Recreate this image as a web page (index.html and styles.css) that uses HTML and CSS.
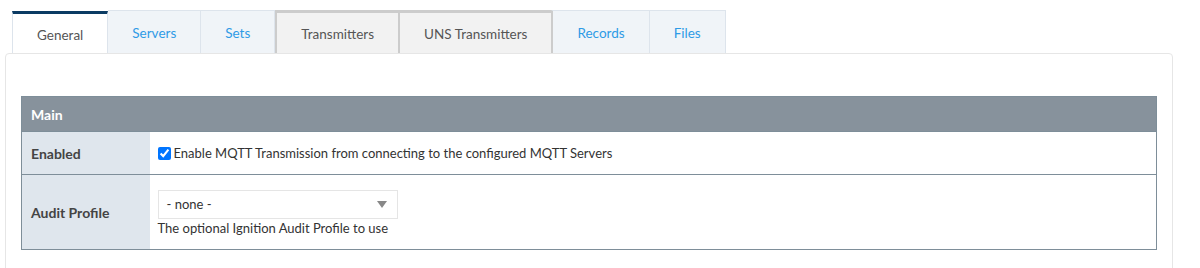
FILE: index.html
```html
<!DOCTYPE html>
<html lang="en">
  <head>
    <meta charset="UTF-8" />
    <meta name="viewport" content="width=device-width, initial-scale=1.0" />
    <title>MQTT Transmission - General</title>
    <link rel="stylesheet" href="styles.css">
  </head>
  <body>
    <ul class="tabs">
      <li class="tab active">General</li>
      <li class="tab">Servers</li>
      <li class="tab">Sets</li>
      <li class="tab muted">Transmitters</li>
      <li class="tab muted">UNS Transmitters</li>
      <li class="tab">Records</li>
      <li class="tab">Files</li>
    </ul>
    <div class="panel">
      <table class="settings">
        <thead>
          <tr>
            <th colspan="2">Main</th>
          </tr>
        </thead>
        <tbody>
          <tr class="row-enabled">
            <td class="label">Enabled</td>
            <td class="field">
              <label class="check">
                <input type="checkbox" checked />
                Enable MQTT Transmission from connecting to the configured MQTT Servers
              </label>
            </td>
          </tr>
          <tr class="row-audit">
            <td class="label">Audit Profile</td>
            <td class="field">
              <div class="select">
                <span>- none -</span>
                <span class="arrow"></span>
              </div>
              <div class="help">The optional Ignition Audit Profile to use</div>
            </td>
          </tr>
        </tbody>
      </table>
    </div>
  </body>
</html>
```

FILE: styles.css
```css
body {
  margin: 0;
  font-family: Lato, "Noto Sans", sans-serif;
  font-size: 13px;
  color: #333;
  background: #fff;
}
.tabs {
  display: flex;
  list-style: none;
  margin: 10px 0 0 12px;
  padding: 0;
  height: 43px;
}
.tab {
  box-sizing: border-box;
  height: 43px;
  padding: 2px 24px 0;
  display: flex;
  align-items: center;
  justify-content: center;
  background: #f0f4f8;
  border: 1px solid #dde4ec;
  border-bottom: none;
  border-left: none;
  color: #2e9be6;
  font-size: 13.5px;
}
.tab.active {
  background: #fff;
  color: #555;
  margin-top: 1px;
  height: 42px;
  border-top: 3px solid #0b3b63;
  border-left: 1px solid #dde4ec;
  border-right: 1px solid #dde4ec;
}
.tab.muted {
  background: #f2f2f2;
  color: #555;
  border-top: 3px solid #cccccc;
  border-left: 2px solid #cccccc;
  border-right: none;
}
.tab.muted + .tab:not(.muted) {
  border-left: 2px solid #cccccc;
}
.panel {
  margin-left: 5px;
  width: 1168px;
  box-sizing: border-box;
  border: 1px solid #e6e6e6;
  border-radius: 4px;
  padding: 42px 15px 30px;
}
.settings {
  width: 100%;
  border-collapse: collapse;
  border: 1px solid #7e8e99;
}
.settings th {
  background: #87929c;
  color: #fff;
  font-weight: bold;
  text-align: left;
  height: 34px;
  padding: 0 9px;
  font-size: 14px;
}
.settings td {
  border-top: 1px solid #7e8e99;
  padding: 0 8px;
}
.label {
  width: 128px;
  box-sizing: border-box;
  background: #dfe6ed;
  font-weight: bold;
  font-size: 14px;
  color: #444;
  padding-left: 9px !important;
}
.row-enabled td {
  height: 42px;
}
.row-audit td {
  height: 73px;
  padding-top: 1px;
}
.check {
  display: flex;
  align-items: center;
  gap: 3px;
  color: #333;
}
.check input {
  margin: 0;
  width: 13px;
  height: 13px;
}
.select {
  box-sizing: border-box;
  width: 240px;
  height: 29px;
  border: 1px solid #e5e5e5;
  display: flex;
  align-items: center;
  justify-content: space-between;
  padding: 0 10px 0 8px;
  color: #333;
}
.arrow {
  width: 0;
  height: 0;
  border-left: 5px solid transparent;
  border-right: 5px solid transparent;
  border-top: 7px solid #888;
}
.help {
  margin-top: 1px;
  color: #333;
}
```
